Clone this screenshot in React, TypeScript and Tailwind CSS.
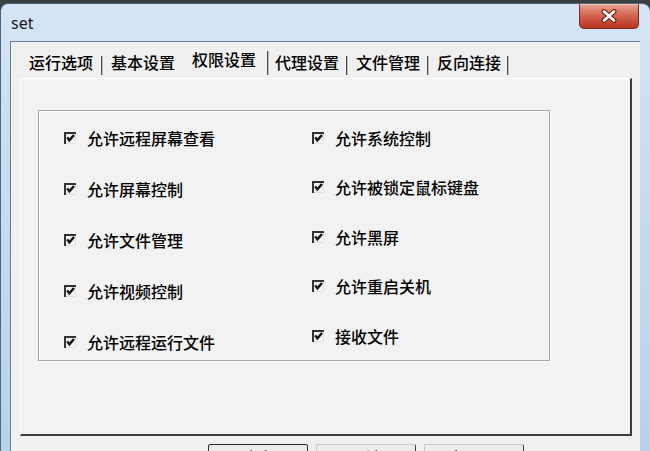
import React from "react";

const CJK = "font-['Noto_Sans_CJK_SC','Noto_Sans',sans-serif]";

const LEFT_ITEMS = [
  "允许远程屏幕查看",
  "允许屏幕控制",
  "允许文件管理",
  "允许视频控制",
  "允许远程运行文件",
];

const RIGHT_ITEMS = [
  "允许系统控制",
  "允许被锁定鼠标键盘",
  "允许黑屏",
  "允许重启关机",
  "接收文件",
];

const CheckBox = () => (
  <svg width="12" height="12" viewBox="0 0 12 12" className="shrink-0">
    <path d="M11.5 0.5 V11.5 H0.5" fill="none" stroke="#e2e2e2" />
    <path d="M1 12 V1 H12" fill="none" stroke="#333" strokeWidth="2" />
    <path d="M3.2 5.4 L5.4 8.4 L10 3" fill="none" stroke="#111" strokeWidth="2.4" />
  </svg>
);

const Option = ({ label, h }: { label: string; h: string }) => (
  <div className={`flex items-center gap-[11px] ${h}`}>
    <CheckBox />
    <span className="text-[16px] leading-none text-black font-medium whitespace-nowrap">{label}</span>
  </div>
);

const Sep = ({ tall }: { tall?: boolean }) => (
  <div
    className={`w-[2px] shrink-0 bg-[#4a4a4a] border-r border-[#bdbdbd] ${
      tall ? "h-[24px]" : "h-[19px]"
    }`}
  />
);

const CloseButton = () => (
  <div className="w-[60px] h-[25px] mr-[1px] rounded-b-[5px] border border-t-0 border-[#7a2a20] bg-gradient-to-b from-[#e9a393] via-[#d1614d] to-[#b8321f] flex items-center justify-center shadow-[inset_0_1px_0_rgba(255,255,255,0.4)]">
    <svg width="18" height="14" viewBox="0 0 18 14">
      <path d="M4 2.5 L14 11.5 M14 2.5 L4 11.5" stroke="#6b2318" strokeWidth="5" strokeLinecap="round" />
      <path d="M4 2.5 L14 11.5 M14 2.5 L4 11.5" stroke="#fff" strokeWidth="2.6" strokeLinecap="round" />
    </svg>
  </div>
);

const Button = ({ label, primary }: { label: string; primary?: boolean }) => (
  <div
    className={`w-[100px] h-[26px] shrink-0 rounded-[2px] bg-[#ececec] flex items-center justify-center border ${
      primary ? "border-[#2a2a2a]" : "border-[#c8c8c8] border-r-[#3a3a3a]"
    }`}
  >
    {label}
  </div>
);

export default function App() {
  return (
    <div className={`w-[650px] h-[451px] overflow-hidden bg-[#3c403c] ${CJK}`}>
      <div className="h-[3px]" />
      <div className="rounded-tl-[8px] rounded-tr-[8px] border-l border-t border-[#50657e] bg-gradient-to-b from-[#d4e5f6] via-[#c3d9ef] to-[#b5cfea] pr-[10px] pl-[9px] pb-[20px]">
        {/* title bar */}
        <div className="h-[37px] flex items-start justify-between">
          <span className="mt-[11px] ml-[1px] text-[16px] leading-none text-[#1a1a1a] font-['Noto_Sans',sans-serif]">
            set
          </span>
          <CloseButton />
        </div>

        {/* client area */}
        <div className="bg-[#f0f0f0] border-t border-l border-[#6d7d90] pl-[9px] pr-[8px] pb-[20px]">
          {/* tabs */}
          <div className="h-[36px] flex items-end pb-[3px] text-[16px] leading-none text-black font-medium whitespace-nowrap">
            <span className="pl-[9px] pr-[8px] pb-[5px]">运行选项</span>
            <Sep />
            <span className="pl-[8px] pb-[5px]">基本设置</span>
            <span className="pl-[17px] pr-[11px] pb-[8px]">权限设置</span>
            <Sep tall />
            <span className="pl-[6px] pr-[7px] pb-[5px]">代理设置</span>
            <Sep />
            <span className="pl-[8px] pr-[7px] pb-[5px]">文件管理</span>
            <Sep />
            <span className="pl-[8px] pr-[6px] pb-[5px]">反向连接</span>
            <Sep />
          </div>

          {/* tab page */}
          <div className="h-[358px] bg-[#f2f2f2] border-t border-l border-white border-r-2 border-b-2 border-r-[#3c3c3c] border-b-[#3c3c3c] pl-[17px] pt-[31px]">
            <div className="w-[512px] h-[251px] border border-[#a6a6a6] shadow-[inset_1px_1px_0_#ffffff,1px_1px_0_#ffffff] flex pl-[25px]">
              <div className="w-[248px] pt-[1px]">
                {LEFT_ITEMS.map((label) => (
                  <Option key={label} label={label} h="h-[51px]" />
                ))}
              </div>
              <div className="pt-[2px]">
                {RIGHT_ITEMS.map((label) => (
                  <Option key={label} label={label} h="h-[49.5px]" />
                ))}
              </div>
            </div>
          </div>

          {/* buttons */}
          <div className="flex gap-[8px] pl-[188px] pt-[8px] text-[16px] leading-none">
            <Button label="确定" primary />
            <Button label="取消" />
            <Button label="应用(A)" />
          </div>
        </div>
      </div>
    </div>
  );
}
